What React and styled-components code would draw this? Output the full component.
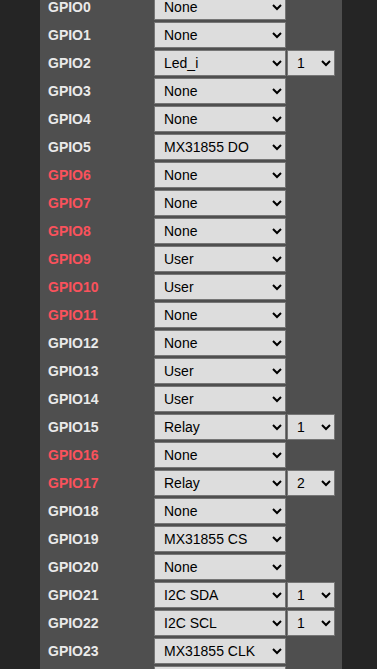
import React from "react";
import styled, { createGlobalStyle } from "styled-components";

const GlobalStyle = createGlobalStyle`
  html, body {
    margin: 0;
    padding: 0;
    background: #252525;
    overflow: hidden;
  }
  body {
    font-family: "Liberation Sans", Arial, sans-serif;
  }
`;

const Panel = styled.div`
  margin: -7px 0 0 40px;
  width: 302px;
  background: #4f4f4f;
  padding: 0 0 0 8px;
  box-sizing: border-box;
  min-height: 720px;
`;

const Row = styled.div`
  display: flex;
  align-items: center;
  height: 28px;
`;

const Label = styled.div`
  width: 106px;
  font-size: 14px;
  font-weight: bold;
  color: ${(p) => (p.$warn ? "#fa525c" : "#eaeaea")};
`;

const Select = styled.select`
  width: ${(p) => (p.$small ? "48px" : "132px")};
  height: 26px;
  margin-right: 1px;
  background-color: #dddddd;
  color: #000;
  border: 1px solid #767676;
  border-radius: 0;
  font-family: "Liberation Sans", Arial, sans-serif;
  font-size: 14px;
  padding: 0 0 0 5px;
`;

const rows = [
  ["None"],
  ["None"],
  ["Led_i", "1"],
  ["None"],
  ["None"],
  ["MX31855 DO"],
  ["None", null, true],
  ["None", null, true],
  ["None", null, true],
  ["User", null, true],
  ["User", null, true],
  ["None", null, true],
  ["None"],
  ["User"],
  ["User"],
  ["Relay", "1"],
  ["None", null, true],
  ["Relay", "2", true],
  ["None"],
  ["MX31855 CS"],
  ["None"],
  ["I2C SDA", "1"],
  ["I2C SCL", "1"],
  ["MX31855 CLK"],
  ["None"],
  ["None"],
];

export default function App() {
  return (
    <>
      <GlobalStyle />
      <Panel>
        {rows.map(([fn, idx, warn], i) => (
          <Row key={i}>
            <Label $warn={warn}>GPIO{i}</Label>
            <Select defaultValue={fn}>
              <option>{fn}</option>
            </Select>
            {idx && (
              <Select $small defaultValue={idx}>
                <option>{idx}</option>
              </Select>
            )}
          </Row>
        ))}
      </Panel>
    </>
  );
}
